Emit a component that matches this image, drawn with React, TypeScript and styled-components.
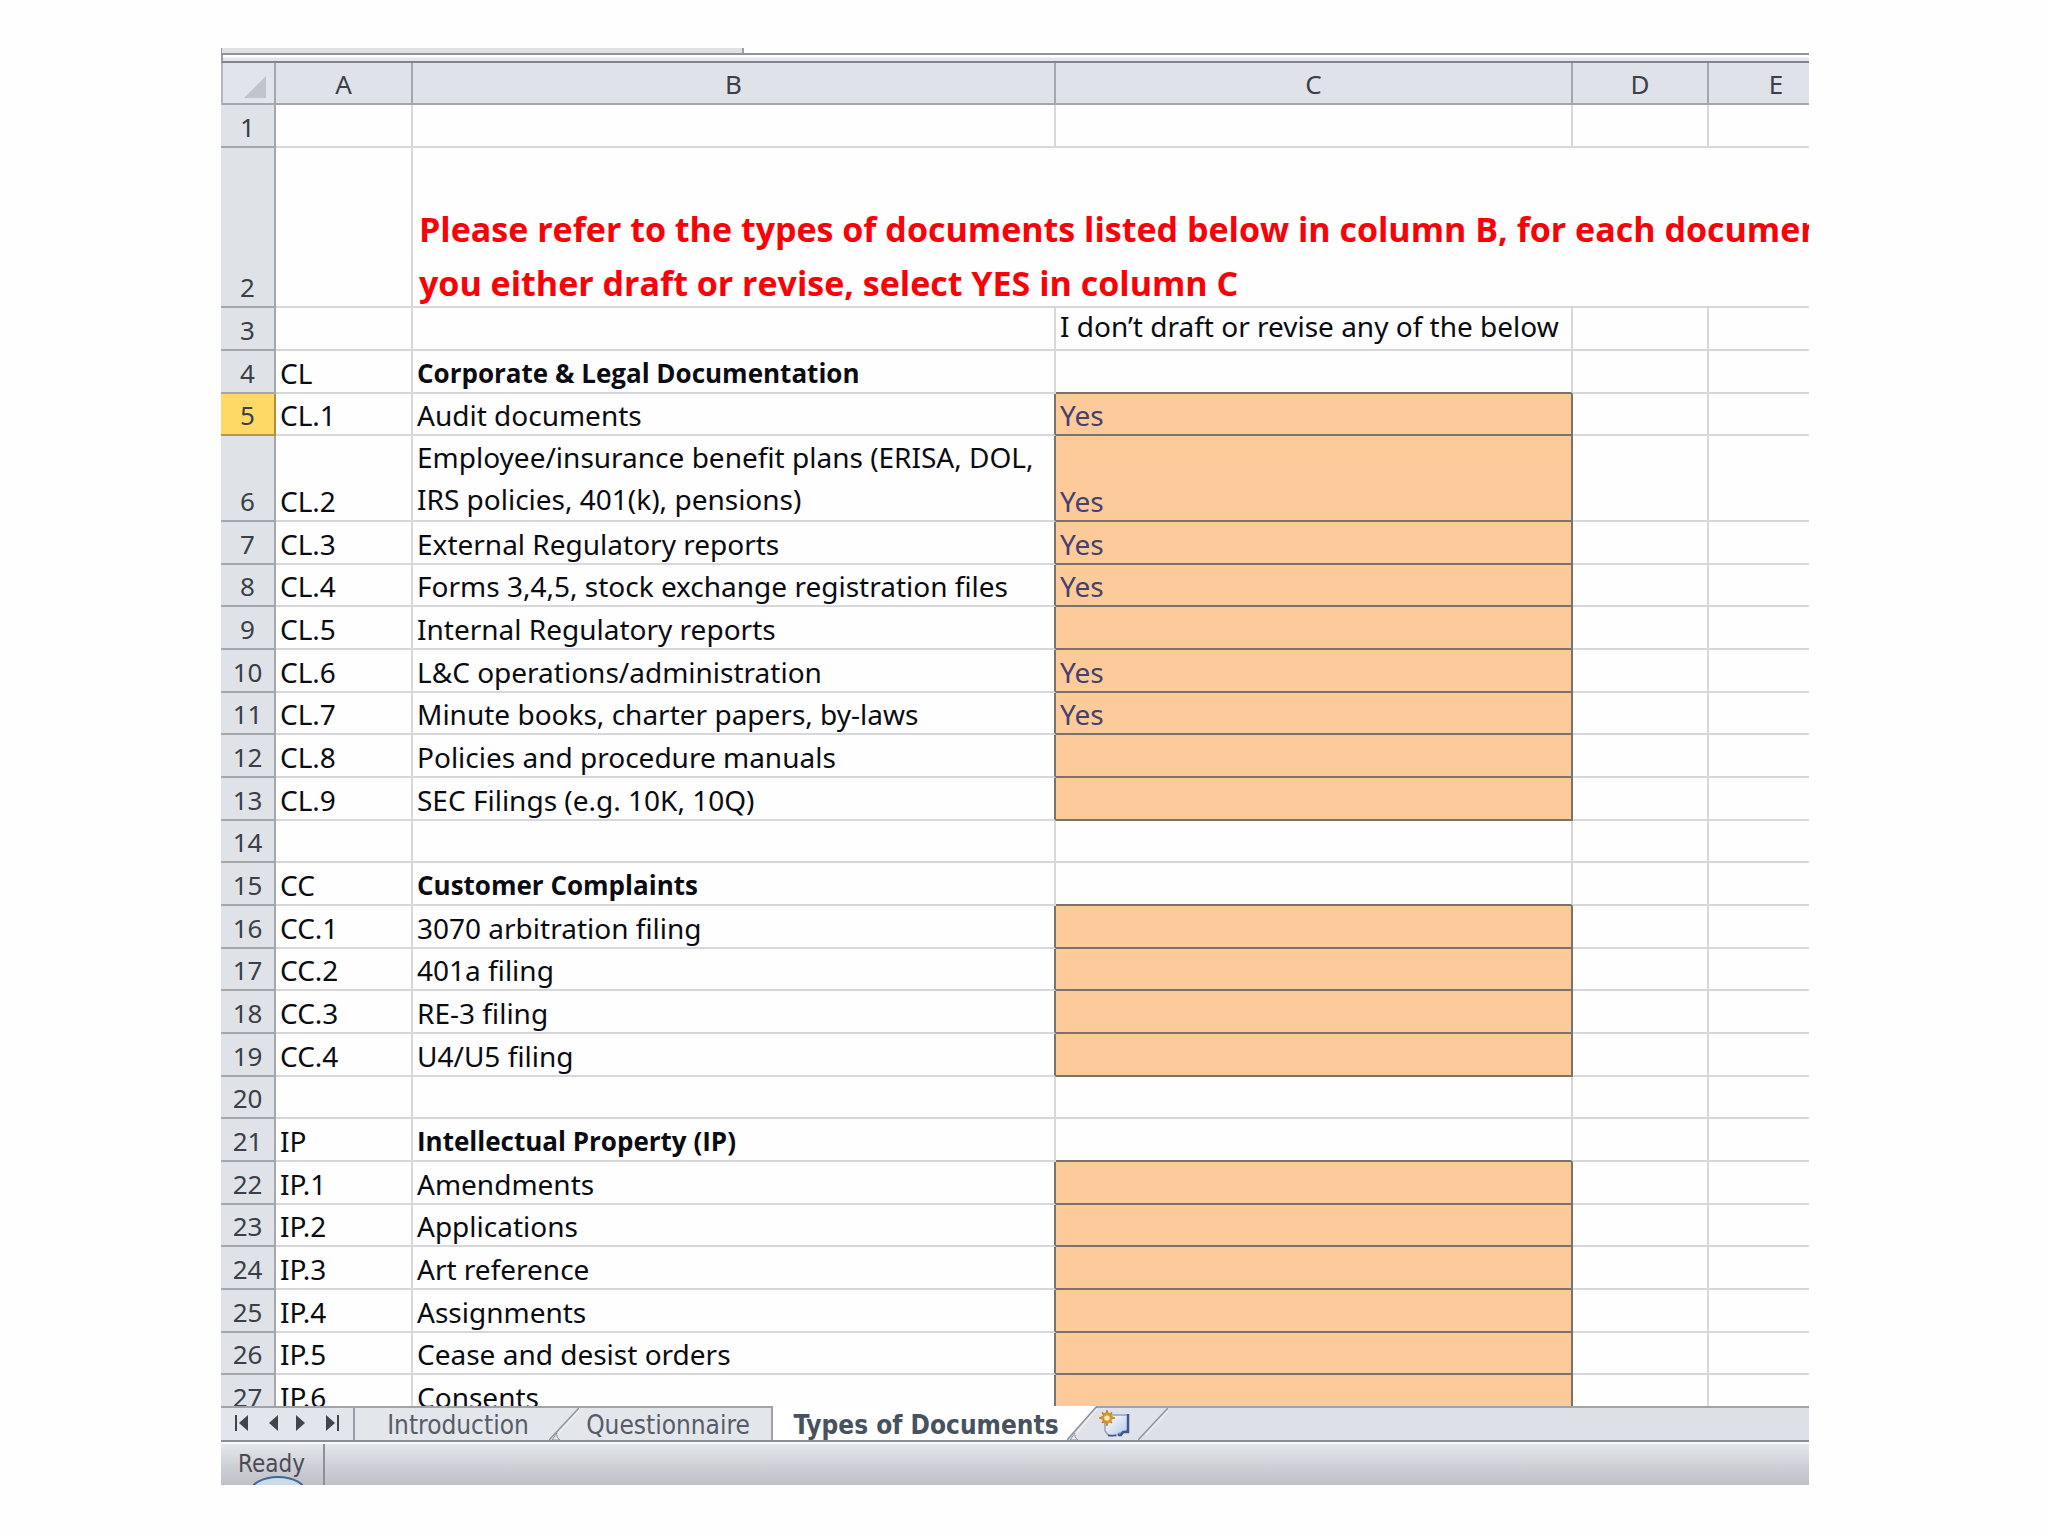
import React from "react";
import styled, { createGlobalStyle, css } from "styled-components";

const GlobalStyle = createGlobalStyle`
  * { box-sizing: border-box; }
  body { margin: 0; background: #fefefe; }
`;

const cellFont = `"Noto Sans", "Open Sans", sans-serif`;
const strongFont = `"Open Sans", "Noto Sans", sans-serif`;
const uiFont = `"DejaVu Sans Condensed", "DejaVu Sans", sans-serif`;
const grid = "#d6d8dc";
const headLine = "#a3a7ae";
const inputLine = "#77736f";

const Page = styled.main`
  display: flex;
  flex-direction: column;
  height: 100vh;
  padding: 48px 239px 51px 221px;
`;

const RibbonEdge = styled.div`
  height: 7px;
  border-bottom: 2px solid #8f939b;
  flex: none;
`;

const NameBoxEdge = styled.div`
  width: 523px;
  height: 5px;
  background: #e0e1e3;
  border-right: 2px solid #9a9da3;
  border-left: 1px solid #9a9da3;
`;

const FormulaEdge = styled.div`
  height: 8px;
  flex: none;
  border-left: 2px solid #9a9da3;
  border-bottom: 2px solid #80848e;
  background: linear-gradient(#ffffff 25%, #e4e5f0 60%);
`;

const SheetView = styled.div`
  flex: 1;
  min-height: 0;
  overflow: hidden;
`;

const Sheet = styled.table`
  width: 1624px;
  table-layout: fixed;
  border-collapse: separate;
  border-spacing: 0;
  font-family: ${cellFont};
  font-size: 28px;
  line-height: 38px;
  color: #0b0b12;
`;

const Col = styled.col<{ $w: number }>`
  width: ${(p) => p.$w}px;
`;

const ColumnHead = styled.th`
  height: 42px;
  padding: 2px 0 0;
  font-weight: 400;
  font-size: 26px;
  text-align: center;
  color: #3a3f4a;
  background: #e0e2ea;
  border-right: 2px solid ${headLine};
  border-bottom: 2px solid ${headLine};
`;

const Corner = styled(ColumnHead)`
  background: #e1e5eb;
  border-left: 2px solid #b4b8be;
  svg {
    display: block;
    margin: 6px 8px 0 auto;
  }
`;

const Row = styled.tr<{ $tall?: number }>`
  height: ${(p) => p.$tall ?? 43}px;
  &:nth-child(3n + 2) {
    height: ${(p) => p.$tall ?? 42}px;
  }
`;

const RowHead = styled.th<{ $active: boolean }>`
  padding: 0;
  font-weight: 400;
  font-size: 26px;
  text-align: center;
  vertical-align: bottom;
  color: #3a3f4a;
  background: ${(p) => (p.$active ? "#ffd965" : "#dfe3e8")};
  border-right: 2px solid ${(p) => (p.$active ? "#b98a3a" : headLine)};
  border-bottom: 2px solid ${(p) => (p.$active ? "#c1913c" : headLine)};
`;

const Cell = styled.td<{ $bold?: boolean; $rightLine?: boolean; $bottomLine?: boolean; $lines?: number }>`
  padding: 0 0 0 4px;
  vertical-align: bottom;
  white-space: pre;
  ${(p) =>
    p.$bold &&
    css`
      font-family: ${strongFont};
      font-size: 26px;
      font-weight: 700;
    `}
  line-height: ${(p) => (p.$lines === 2 ? 42 : 38)}px;
  border-right: 2px solid ${(p) => (p.$rightLine ? inputLine : grid)};
  border-bottom: 2px solid ${(p) => (p.$bottomLine ? inputLine : grid)};
`;

const NoteCell = styled(Cell)`
  vertical-align: top;
  line-height: 36px;
`;

const AnswerCell = styled(Cell)`
  background: #fdcb99;
  color: #45406f;
`;

const InstructionCell = styled.td`
  padding: 54px 0 0 6px;
  vertical-align: top;
  border-bottom: 2px solid ${grid};
`;

const Instruction = styled.div`
  height: 104px;
  white-space: pre;
  font-family: ${strongFont};
  font-size: 34px;
  line-height: 54px;
  font-weight: 700;
  color: #fb0007;
`;

const TabBar = styled.nav`
  flex: none;
  display: flex;
  align-items: stretch;
  height: 36px;
  background: #dde0e7;
  border-top: 2px solid #a0a3a9;
  border-bottom: 2px solid #8b8e96;
`;

const buttonReset = css`
  appearance: none;
  border: 0;
  margin: 0;
  padding: 0;
  background: none;
  display: flex;
  align-items: center;
  justify-content: center;
`;

const Scrollers = styled.div`
  display: flex;
  align-items: center;
  width: 134px;
  padding: 0 6px 2px 6px;
  background: #e2e6ec;
  border-right: 2px solid #9a9da4;
`;

const ScrollButton = styled.button`
  ${buttonReset}
  flex: 1;
`;

const Tab = styled.button<{ $active?: boolean; $w: number }>`
  ${buttonReset}
  width: ${(p) => p.$w}px;
  padding: 2px 0 0 12px;
  font-family: ${uiFont};
  font-size: 26px;
  line-height: 30px;
  white-space: nowrap;
  font-weight: ${(p) => (p.$active ? 700 : 400)};
  color: ${(p) => (p.$active ? "#47525f" : "#565c68")};
  background: ${(p) => (p.$active ? "#ffffff" : "#e3e6ea")};
`;

const LastPlainTab = styled(Tab)`
  padding: 2px 14px 0 0;
  border-right: 2px solid #a0a3a9;
`;

const ActiveTab = styled(Tab)`
  margin-top: -2px;
  padding-top: 4px;
`;

const NewTab = styled.button`
  ${buttonReset}
  width: 41px;
  padding-right: 6px;
  background: #e0e2e9;
`;

const SlashSvg = styled.svg<{ $raised?: boolean }>`
  display: block;
  flex: none;
  margin-top: ${(p) => (p.$raised ? -2 : 0)}px;
`;

const StatusBar = styled.footer`
  flex: none;
  height: 43px;
  display: flex;
  position: relative;
  overflow: hidden;
  border-top: 2px solid #f7f9fb;
  background: linear-gradient(#e4e8ee, #cfd1d7 50%, #c0c1c8);
`;

const StatusText = styled.span`
  width: 104px;
  padding-left: 17px;
  font-family: ${uiFont};
  font-size: 24px;
  line-height: 40px;
  color: #4d4a55;
  border-right: 2px solid #8e9097;
`;

const Orb = styled.svg`
  position: absolute;
  left: 32px;
  bottom: 0;
`;

type Line = {
  code?: string;
  text?: string;
  bold?: boolean;
  answer?: string;
};

const lines: Record<number, Line> = {
  4: { code: "CL", text: "Corporate & Legal Documentation", bold: true },
  5: { code: "CL.1", text: "Audit documents", answer: "Yes" },
  6: {
    code: "CL.2",
    text: "Employee/insurance benefit plans (ERISA, DOL,\nIRS policies, 401(k), pensions)",
    answer: "Yes",
  },
  7: { code: "CL.3", text: "External Regulatory reports", answer: "Yes" },
  8: { code: "CL.4", text: "Forms 3,4,5, stock exchange registration files", answer: "Yes" },
  9: { code: "CL.5", text: "Internal Regulatory reports", answer: "" },
  10: { code: "CL.6", text: "L&C operations/administration", answer: "Yes" },
  11: { code: "CL.7", text: "Minute books, charter papers, by-laws", answer: "Yes" },
  12: { code: "CL.8", text: "Policies and procedure manuals", answer: "" },
  13: { code: "CL.9", text: "SEC Filings (e.g. 10K, 10Q)", answer: "" },
  15: { code: "CC", text: "Customer Complaints", bold: true },
  16: { code: "CC.1", text: "3070 arbitration filing", answer: "" },
  17: { code: "CC.2", text: "401a filing", answer: "" },
  18: { code: "CC.3", text: "RE-3 filing", answer: "" },
  19: { code: "CC.4", text: "U4/U5 filing", answer: "" },
  21: { code: "IP", text: "Intellectual Property (IP)", bold: true },
  22: { code: "IP.1", text: "Amendments", answer: "" },
  23: { code: "IP.2", text: "Applications", answer: "" },
  24: { code: "IP.3", text: "Art reference", answer: "" },
  25: { code: "IP.4", text: "Assignments", answer: "" },
  26: { code: "IP.5", text: "Cease and desist orders", answer: "" },
  27: { code: "IP.6", text: "Consents", answer: "" },
};

const rowNumbers = Array.from({ length: 27 }, (_, i) => i + 1);
const hasAnswer = (n: number) => lines[n]?.answer !== undefined;

function SheetRow({ n }: { n: number }) {
  const line = lines[n] ?? {};
  const head = (
    <RowHead scope="row" $active={n === 5}>
      {n}
    </RowHead>
  );
  if (n === 2) {
    return (
      <Row $tall={160}>
        {head}
        <Cell />
        <InstructionCell colSpan={4}>
          <Instruction>
            {"Please refer to the types of documents listed below in column B, for each document\nyou either draft or revise, select YES in column C"}
          </Instruction>
        </InstructionCell>
      </Row>
    );
  }
  const twoLines = line.text?.includes("\n");
  return (
    <Row $tall={twoLines ? 86 : undefined}>
      {head}
      <Cell>{line.code}</Cell>
      <Cell $bold={line.bold} $lines={twoLines ? 2 : 1} $rightLine={hasAnswer(n)}>
        {line.text}
      </Cell>
      {n === 3 ? (
        <NoteCell>I don’t draft or revise any of the below</NoteCell>
      ) : hasAnswer(n) ? (
        <AnswerCell $rightLine $bottomLine>
          {line.answer}
        </AnswerCell>
      ) : (
        <Cell $bottomLine={hasAnswer(n + 1)} />
      )}
      <Cell />
      <Cell />
    </Row>
  );
}

function Arrow({ back, stop }: { back?: boolean; stop?: boolean }) {
  return (
    <svg width="14" height="16" viewBox="0 0 14 16" fill="#3f454e" aria-hidden="true">
      {back ? <path d="M13 0v16L4 8z" /> : <path d="M1 0v16l9-8z" />}
      {stop && <rect x={back ? 0 : 12} y="0" width="2" height="16" />}
    </svg>
  );
}

function Slash({ left, right, raised, hook = true }: { left: string; right: string; raised?: boolean; hook?: boolean }) {
  const h = raised ? 34 : 32;
  return (
    <SlashSvg $raised={raised} width="30" height={h} viewBox={`0 0 30 ${h}`} aria-hidden="true">
      <rect width="30" height={h} fill={right} />
      <path d={`M0 0H30L0 ${h}Z`} fill={left} />
      {hook && <path d={`M3 ${h}L8 ${h - 7}L8 ${h - 3}L11 ${h}Z`} fill="#e8eaee" stroke="#8f9299" />}
      <path d={`M30 0L0 ${h}`} stroke="#8f9299" strokeWidth="1.5" fill="none" />
      <path d={`M30 3L8 ${h - 5}`} stroke="#f6f7f9" strokeWidth="1" fill="none" />
    </SlashSvg>
  );
}

function NewSheetIcon() {
  return (
    <svg width="34" height="28" viewBox="0 0 34 28" aria-hidden="true">
      <defs>
        <linearGradient id="sheetFill" x1="0" y1="0" x2="1" y2="1">
          <stop offset="0" stopColor="#ffffff" />
          <stop offset="1" stopColor="#b4c8e6" />
        </linearGradient>
      </defs>
      <path d="M7 5H30V19L25 23H21L18 26L14 25L11 26L7 21Z" fill="url(#sheetFill)" stroke="#8fa3c6" strokeWidth="1.5" />
      <path d="M30 4V22H25L23 25H20" fill="none" stroke="#42588c" strokeWidth="2.5" />
      <path d="M10 25l4 1 4-1" fill="none" stroke="#42588c" strokeWidth="1.5" />
      <path
        d="M9 0l1.500 4L14 2.500 12.500 6 17 8l-4.500 1.500L14 13l-3.500-1.200L9 16l-1.500-4.200L4 13l1.500-3.500L1 8l4.500-2L4 2.500 7.500 4z"
        fill="#e39a1f"
        stroke="#b8741a"
        strokeWidth="0.800"
      />
      <circle cx="9" cy="8" r="2.600" fill="#fff3b8" />
    </svg>
  );
}

export default function App() {
  return (
    <>
      <GlobalStyle />
      <Page>
        <RibbonEdge>
          <NameBoxEdge />
        </RibbonEdge>
        <FormulaEdge />
        <SheetView>
          <Sheet>
            <colgroup>
              <Col $w={55} />
              <Col $w={137} />
              <Col $w={643} />
              <Col $w={517} />
              <Col $w={136} />
              <Col $w={136} />
            </colgroup>
            <thead>
              <tr>
                <Corner>
                  <svg width="22" height="22" viewBox="0 0 22 22" aria-hidden="true">
                    <path d="M22 0V22H0Z" fill="#c0c5cd" />
                  </svg>
                </Corner>
                {["A", "B", "C", "D", "E"].map((name) => (
                  <ColumnHead key={name} scope="col">
                    {name}
                  </ColumnHead>
                ))}
              </tr>
            </thead>
            <tbody>
              {rowNumbers.map((n) => (
                <SheetRow key={n} n={n} />
              ))}
            </tbody>
          </Sheet>
        </SheetView>
        <TabBar aria-label="Sheets">
          <Scrollers>
            <ScrollButton aria-label="First sheet">
              <Arrow back stop />
            </ScrollButton>
            <ScrollButton aria-label="Previous sheet">
              <Arrow back />
            </ScrollButton>
            <ScrollButton aria-label="Next sheet">
              <Arrow />
            </ScrollButton>
            <ScrollButton aria-label="Last sheet">
              <Arrow stop />
            </ScrollButton>
          </Scrollers>
          <Tab $w={194}>Introduction</Tab>
          <Slash left="#e3e6ea" right="#e3e6ea" />
          <LastPlainTab $w={194}>Questionnaire</LastPlainTab>
          <ActiveTab $active $w={294}>
            Types of Documents
          </ActiveTab>
          <Slash left="#ffffff" right="#e0e2e9" raised />
          <NewTab aria-label="Insert sheet">
            <NewSheetIcon />
          </NewTab>
          <Slash left="#e0e2e9" right="#dde0e7" hook={false} />
        </TabBar>
        <StatusBar>
          <StatusText>Ready</StatusText>
          <Orb width="50" height="9" viewBox="0 0 50 9" aria-hidden="true">
            <ellipse cx="25" cy="17" rx="28" ry="16" fill="#c9dcec" stroke="#3d6a94" strokeWidth="2" />
          </Orb>
        </StatusBar>
      </Page>
    </>
  );
}
